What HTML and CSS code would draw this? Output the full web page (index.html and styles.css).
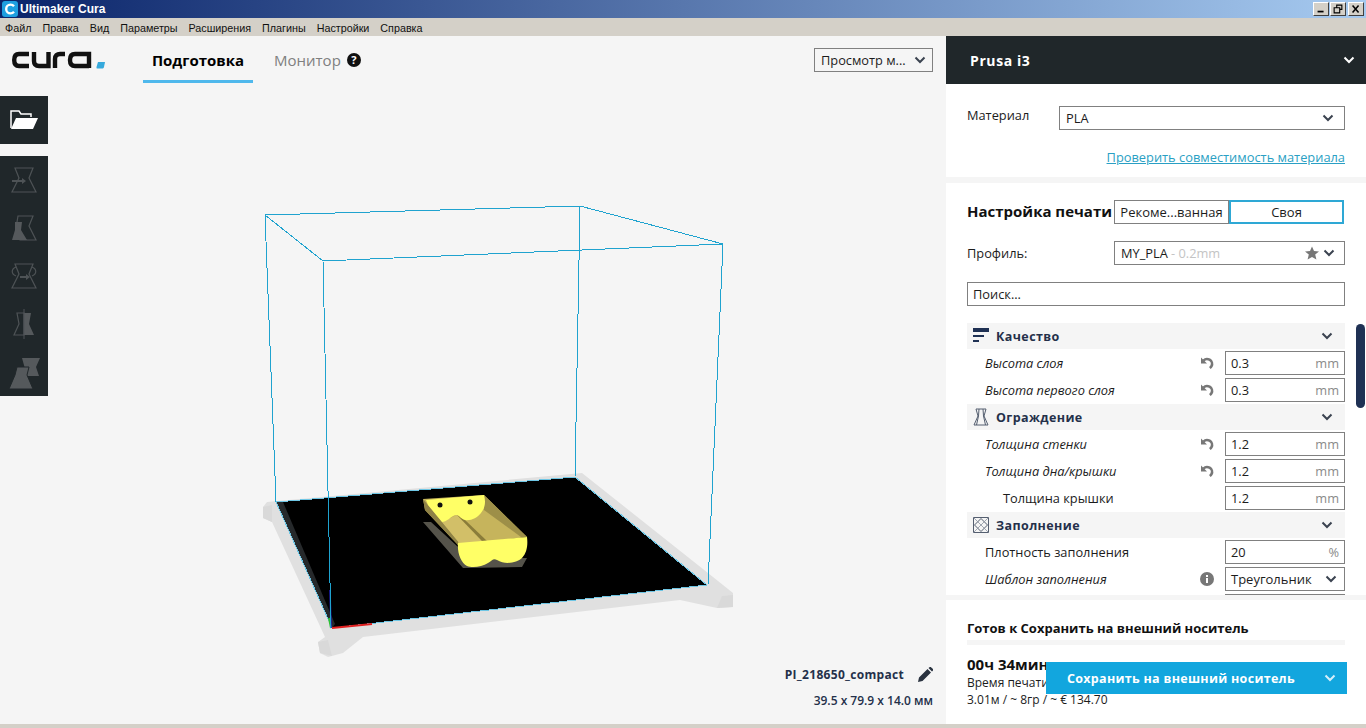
FILE: index.html
```html
<!DOCTYPE html>
<html lang="ru">
<head>
<meta charset="utf-8">
<title>Ultimaker Cura</title>
<link rel="stylesheet" href="styles.css">
</head>
<body>
<svg class="defs" width="0" height="0">
  <symbol id="chev" viewBox="0 0 12 8"><path d="M1.5 1.5 6 6l4.5-4.5" fill="none" stroke="currentColor" stroke-width="2"/></symbol>
  <symbol id="reset" viewBox="0 0 14 14"><path d="M3.5 4.6C5 3 7.5 2.6 9.6 3.7c2.3 1.3 3.1 4.1 1.9 6.4-.4.8-1 1.4-1.7 1.9" fill="none" stroke="#777" stroke-width="2.6"/><path d="M1 1.600v6h6z" fill="#777"/></symbol>
</svg>
<div class="window">
  <div class="titlebar">
    <svg class="appicon" viewBox="0 0 16 16"><rect width="16" height="16" rx="3" fill="#1e9fe0"/><path d="M12 5.2C11 4 9.8 3.6 8.6 3.6 6 3.6 4.2 5.6 4.2 8s1.800 4.400 4.400 4.400c1.200 0 2.400-.4 3.400-1.600" fill="none" stroke="#fff" stroke-width="2.400"/></svg>
    <span class="apptitle">Ultimaker Cura</span>
    <div class="winbtns">
      <span class="winbtn"><svg viewBox="0 0 16 14"><rect x="4" y="9" width="7" height="2" fill="#000"/></svg></span>
      <span class="winbtn"><svg viewBox="0 0 16 14"><path d="M6.500 5V2.500h6v5H10M3.500 5.500h6.500v6H3.500z" fill="none" stroke="#000" stroke-width="1.300"/></svg></span>
      <span class="winbtn winclose"><svg viewBox="0 0 16 14"><path d="m4 3 7 8M11 3l-7 8" stroke="#000" stroke-width="1.800"/></svg></span>
    </div>
  </div>
  <div class="menubar">
    <span>Файл</span><span>Правка</span><span>Вид</span><span>Параметры</span><span>Расширения</span><span>Плагины</span><span>Настройки</span><span>Справка</span>
  </div>
  <div class="main">
    <div class="stage">
      <svg class="scene" viewBox="0 0 946 692" width="946" height="692">
        <g transform="translate(0 -36)">
          <path d="M263 507 267 502 582 473 713 577 733 593 733 607 717 608 680 600 363 637 343 653 328 657 320 653 318 642 325 637 272 522 263 518z" fill="#e0e0e0"/>
          <path d="M263 507 272 505 272 522 263 518zM733 595 722 596 717 608 733 607zM318 642 328 640 332 656 320 653z" fill="#d9d9d9"/>
          <path d="M276 502 575 477 707 585 332 628z" fill="#000"/>
          <path d="M276 502 283 502 335 624 332 628z" fill="#26292b"/>
          <path class="crisp" d="M276 502 575 477 707 585 332 628z" fill="none" stroke="#6fc6e4" stroke-width="1"/>
          <path d="M332 628 372 624" stroke="#e02020" stroke-width="2"/>
          <path d="M331 628 329 618" stroke="#30c030" stroke-width="2"/>
          <path d="M331 628 330 590" stroke="#2020c0" stroke-width="1.500"/>
          <path class="crisp" d="M265 215 580 206 723 244 323 261z M265 215 276 502 M580 206 575 477 M723 244 708 585 M323 261 331 628" fill="none" stroke="#1fa3cf" stroke-width="1"/>
          <path d="M423 522 431 522 470 558 527 558 522 567 463 568z" fill="#55534a"/>
          <path d="M423 499 484 495 527 537 458 545 425 510z" fill="#c4b25a"/>
          <path d="M423 499 425 510 458 545 458 541 428 505z" fill="#8f8246"/>
          <path d="M442 522 457 515 482 541 460 544z" fill="#d2bf68"/>
          <path d="M465 520 484 510 523 537 487 541z" fill="#c6b45c"/>
          <path d="M457 515 465 520 487 541 482 541z" fill="#8a7c3a"/>
          <path d="M484 495 527 537 521 537 484 510z" fill="#9d8f48"/>
          <path d="M426 500 484 495C486 502 485 508 481 513 477 518 471 521 465 520 461 519 459 515 457 515 454 515 451 517 449 519 446 521 444 522 442 522L428 505z" fill="#ffff66"/>
          <path d="M458 543 527 537C528 545 527 553 522 558 517 563 505 565 497 560 493 558 492 561 488 563 482 567 472 568 467 566 461 563 457 553 458 543z" fill="#ffff66"/>
          <circle cx="440" cy="505" r="2.500" fill="#111"/><circle cx="470" cy="502" r="2.500" fill="#111"/>
        </g>
      </svg>
      <div class="stagebar">
        <svg class="logo" viewBox="0 0 94 20">
          <g fill="none" stroke="#111" stroke-width="4.400">
            <path d="M17 4H7C3.500 4 2.200 6 2.200 10s1.300 6 4.800 6h10"/>
            <path d="M22 2v9c0 3.500 2 5 5 5h9.500V2"/>
            <path d="M43 18V9c0-3.500 2-5 5-5h5"/>
            <path d="M77 18V4H63c-3.500 0-5 2-5 6s1.500 6 5 6h14"/>
          </g>
          <path d="M86 12h7l-1 5c-.3 1-1 1.500-2 1.500h-4.500c-1 0-1-.5-1-1.500z" fill="#36a9dc"/>
        </svg>
        <div class="tab tab-active">Подготовка</div>
        <div class="tab tab-idle">Монитор</div>
        <span class="helpicon">?</span>
        <div class="viewselect"><span>Просмотр м...</span><svg class="chev"><use href="#chev"/></svg></div>
      </div>
      <div class="tool tool-open">
        <svg viewBox="0 0 48 48" width="48" height="48"><path d="M11 32V15h8l2 3h10v3" fill="none" stroke="#fff" stroke-width="1.500"/><path d="M16 22h22l-5 11H11z" fill="#fff"/></svg>
      </div>
      <div class="toolset">
        <div class="tool"><svg viewBox="0 0 48 48" width="48" height="48"><g fill="none" stroke="#4e5356" stroke-width="1.200"><path d="M15 12h18l-4 10 7 14H12l7-14z"/></g><path d="M12 24h10v-2l4 3-4 3v-2H12z" fill="#4e5356"/></svg></div>
        <div class="tool"><svg viewBox="0 0 48 48" width="48" height="48"><path d="M18 12h15l-4 10 7 14H20l-2-8-1-10z" fill="none" stroke="#4e5356" stroke-width="1.200"/><path d="M15 18h7l-1 8 6 10H12l3-10z" fill="#55595c"/></svg></div>
        <div class="tool"><svg viewBox="0 0 48 48" width="48" height="48"><path d="M15 12h18l-4 10 7 14H12l7-14z" fill="none" stroke="#4e5356" stroke-width="1.200"/><path d="M16 15c-5 2-5 7 0 9M32 15c5 2 5 7 0 9" fill="none" stroke="#4e5356" stroke-width="1.200"/><path d="M20 24h6v-2l4 3-4 3v-2h-6z" fill="#4e5356"/></svg></div>
        <div class="tool"><svg viewBox="0 0 48 48" width="48" height="48"><path d="M17 13h7v22H14l5-11z" fill="none" stroke="#4e5356" stroke-width="1.200"/><path d="M24 13h7l-2 11 5 11H24z" fill="#55595c"/><path d="M24 9v30" stroke="#4e5356" stroke-width="1"/></svg></div>
        <div class="tool"><svg viewBox="0 0 48 48" width="48" height="48"><path d="M22 10h18l-4 9 3 9H27z" fill="#55595c"/><path d="M17 19h12l-2 8 6 14H9l6-14z" fill="#55595c" stroke="#20272a"/></svg></div>
      </div>
      <div class="objinfo">
        <div class="objname"><span>PI_218650_compact</span>
          <svg viewBox="0 0 16 16" width="16" height="16"><path d="M1 15l1-4.500 8.500-8.500 3.500 3.500L5.500 14zM11.500 1l3.500 3.500 1-1c.4-.5.4-1 0-1.500L14 .2c-.5-.4-1-.4-1.500 0z" fill="#2a3340"/></svg>
        </div>
        <div class="objsize">39.5 x 79.9 x 14.0 мм</div>
      </div>
    </div>
    <div class="sidebar">
      <div class="machine"><span>Prusa i3</span><svg class="chev chev-light"><use href="#chev"/></svg></div>
      <div class="matpanel">
        <div class="matrow">
          <span class="matlabel">Материал</span>
          <div class="field matfield"><span>PLA</span><svg class="chev"><use href="#chev"/></svg></div>
        </div>
        <a class="matlink">Проверить совместимость материала</a>
      </div>
      <div class="setup">
        <div class="setuphead">
          <span class="setuptitle">Настройка печати</span>
          <div class="modes"><span class="mode">Рекоме...ванная</span><span class="mode mode-on">Своя</span></div>
        </div>
        <div class="profilerow">
          <span>Профиль:</span>
          <div class="field profilefield"><span class="pname">MY_PLA</span><span class="pdim">&nbsp;- 0.2mm</span>
            <svg class="star" viewBox="0 0 14 14" width="14" height="14"><path d="M7 .5 9 5l5 .4-3.800 3.200L11.400 13.500 7 11l-4.400 2.500 1.200-4.900L0 5.400 5 5z" fill="#777"/></svg>
            <svg class="chev"><use href="#chev"/></svg>
          </div>
        </div>
        <div class="field searchfield">Поиск...</div>

        <div class="cat cat-first">
          <svg viewBox="0 0 16 18" width="16" height="18"><path d="M0 1h16v4H0z" fill="#1f3154"/><path d="M0 8h11v2H0zM0 13h6v2H0z" fill="#1f3154"/></svg>
          <span>Качество</span><svg class="chev"><use href="#chev"/></svg>
        </div>
        <div class="rows">
          <div class="row"><span class="lbl it">Высота слоя</span><svg class="rowicon"><use href="#reset"/></svg><div class="field val">0.3<em>mm</em></div></div>
          <div class="row"><span class="lbl it">Высота первого слоя</span><svg class="rowicon"><use href="#reset"/></svg><div class="field val">0.3<em>mm</em></div></div>
        </div>
        <div class="cat">
          <svg viewBox="0 0 16 18" width="16" height="18"><path d="M3 1h10l-2 7 4 9H1l4-9zM6 1 5.500 8 3.500 17M10 1l.5 7 2 9" fill="none" stroke="#555f70" stroke-width="1"/></svg>
          <span>Ограждение</span><svg class="chev"><use href="#chev"/></svg>
        </div>
        <div class="rows">
          <div class="row"><span class="lbl it">Толщина стенки</span><svg class="rowicon"><use href="#reset"/></svg><div class="field val">1.2<em>mm</em></div></div>
          <div class="row"><span class="lbl it">Толщина дна/крышки</span><svg class="rowicon"><use href="#reset"/></svg><div class="field val">1.2<em>mm</em></div></div>
          <div class="row"><span class="lbl sub">Толщина крышки</span><div class="field val">1.2<em>mm</em></div></div>
        </div>
        <div class="cat">
          <svg viewBox="0 0 16 16" width="16" height="16"><path d="M.5.5h15v15H.5z" fill="none" stroke="#555f70"/><path d="M8 1.500 14.500 8 8 14.500 1.500 8z" fill="none" stroke="#555f70"/><path d="M1 1l3.500 3.500M15 1l-3.500 3.500M1 15l3.500-3.500M15 15l-3.500-3.500M4.500 4.500l7 7M11.500 4.500l-7 7" stroke="#8a92a0" stroke-width=".8"/></svg>
          <span>Заполнение</span><svg class="chev"><use href="#chev"/></svg>
        </div>
        <div class="rows">
          <div class="row"><span class="lbl">Плотность заполнения</span><div class="field val">20<em>%</em></div></div>
          <div class="row"><span class="lbl it">Шаблон заполнения</span>
            <svg class="rowicon" viewBox="0 0 14 14"><circle cx="7" cy="7" r="7" fill="#777"/><path d="M6 3h2v2H6zM6 6h2v5H6z" fill="#fff"/></svg>
            <div class="field val valselect">Треугольник<svg class="chev"><use href="#chev"/></svg></div></div>
          <div class="row"><span class="lbl"></span><div class="field val"></div></div>
        </div>
      </div>
      <div class="output">
        <div class="outtitle">Готов к Сохранить на внешний носитель</div>
        <div class="outrule"></div>
        <div class="outtime">00ч 34мин</div>
        <div class="outline">Время печати</div>
        <div class="outline">3.01м / ~ 8гр / ~ € 134.70</div>
        <div class="savebtn"><span>Сохранить на внешний носитель</span><svg class="chev"><use href="#chev"/></svg></div>
      </div>
      <div class="scrollthumb"></div>
    </div>
  </div>
  <div class="bottomedge"></div>
</div>
</body>
</html>
```
FILE: styles.css
```css
* { box-sizing: border-box; }
html, body { margin: 0; padding: 0; }
body { width: 1366px; height: 728px; overflow: hidden; background: #f5f5f5; font-family: "Open Sans", "Noto Sans", sans-serif; color: #1c1c1c; font-size: 12.800px; }
.defs { position: absolute; }
.window { display: flex; flex-direction: column; height: 728px; }

.titlebar { height: 18px; display: flex; align-items: center; padding-left: 2px; background: linear-gradient(90deg, #0a246a 0%, #a6caf0 100%); flex: none; }
.appicon { width: 16px; height: 16px; flex: none; }
.apptitle { margin-left: 2px; color: #fff; font: bold 12px "Liberation Sans", sans-serif; }
.winbtns { margin-left: auto; display: flex; gap: 0; padding-right: 2px; }
.winbtn { width: 16px; height: 14px; margin-left: 1px; background: #d4d0c8; border: 1px solid; border-color: #fff #404040 #404040 #fff; display: flex; overflow: hidden; }
.winbtn svg { width: 14px; height: 12px; }
.winclose { margin-left: 2px; }

.menubar { height: 18px; flex: none; background: #d4d0c8; display: flex; align-items: center; gap: 11px; padding: 1px 0 0 5px; font: 10.750px "Liberation Sans", sans-serif; color: #111; }

.main { flex: 1; display: flex; min-height: 0; }
.stage { width: 946px; position: relative; display: flex; flex-direction: column; align-items: flex-start; background: #f5f5f5; }
.scene { position: absolute; left: 0; top: 0; }
.crisp { shape-rendering: crispEdges; }

.stagebar { position: relative; width: 100%; height: 48px; display: flex; align-items: flex-start; flex: none; }
.logo { width: 94px; height: 20px; margin: 14px 0 0 12px; flex: none; }
.tab { height: 47px; padding-top: 13px; font-size: 15px; line-height: 22px; }
.tab-active { margin-left: 37px; width: 110px; text-align: center; font-weight: 700; color: #000; border-bottom: 3px solid #4fb8ec; }
.tab-idle { margin-left: 21px; color: #7f7f7f; }
.helpicon { width: 14px; height: 14px; margin: 17px 0 0 6px; border-radius: 50%; background: #111; color: #fff; font-size: 11px; font-weight: 700; line-height: 14px; text-align: center; flex: none; }
.viewselect { margin: 12px 13px 0 auto; width: 119px; height: 24px; border: 1px solid #808080; background: #fff0; display: flex; align-items: center; justify-content: space-between; padding: 0 6px; font-size: 12.800px; white-space: nowrap; }

.chev { width: 12px; height: 8px; color: #3b4350; flex: none; }
.chev-light { color: #fff; }

.tool { position: relative; width: 48px; height: 48px; background: #20272a; display: block; }
.tool svg { display: block; }
.tool-open { margin-top: 12px; flex: none; }
.toolset { position: relative; margin-top: 12px; flex: none; }

.objinfo { position: relative; margin-top: auto; align-self: flex-end; padding: 0 13px 15px 0; text-align: right; }
.objname { display: flex; align-items: center; gap: 13px; justify-content: flex-end; font-size: 12px; font-weight: 700; color: #24304a; letter-spacing: .3px; }
.objsize { margin-top: 9px; font-size: 12px; font-weight: 600; color: #24304a; }

.sidebar { width: 420px; position: relative; display: flex; flex-direction: column; background: #f5f5f5; }
.machine { height: 48px; flex: none; background: #20272a; color: #fff; display: flex; align-items: center; justify-content: space-between; padding: 0 11px 0 24px; font-size: 14px; font-weight: 700; letter-spacing: .6px; }
.matpanel { height: 93px; flex: none; background: #fff; padding: 22px 21px 0; display: flex; flex-direction: column; }
.matrow { display: flex; align-items: center; }
.matlabel { width: 92px; margin-top: -6px; }
.field { border: 1px solid #808080; background: #fff; height: 24px; display: flex; align-items: center; padding: 0 6px; }
.matfield { flex: 1; justify-content: space-between; padding-right: 10px; }
.matlink { align-self: flex-end; margin-top: 18px; color: #2a9fc4; text-decoration: underline; font-size: 12.850px; line-height: 18px; }

.setup { height: 412px; flex: none; margin-top: 6px; background: #fff; padding: 17px 21px 0; overflow: hidden; }
.setuphead { display: flex; align-items: center; justify-content: space-between; height: 24px; }
.setuptitle { font-size: 15px; font-weight: 700; color: #111; white-space: nowrap; margin-top: -2px; }
.modes { display: flex; width: 230px; flex: none; margin-right: 1px; font-size: 13px; }
.mode { width: 115px; height: 24px; border: 1px solid #808080; display: flex; align-items: center; justify-content: center; }
.mode-on { border: 2px solid #2ea8d5; }
.profilerow { display: flex; align-items: center; justify-content: space-between; margin-top: 17px; }
.profilefield { width: 231px; }
.pdim { color: #c4c4c4; }
.star { margin-left: auto; }
.profilefield .chev { margin-left: 4px; margin-right: 3px; }
.searchfield { margin-top: 17px; padding-left: 5px; }

.cat { height: 26px; margin-top: 2px; background: #f5f5f5; display: flex; align-items: center; padding: 0 12px 0 6px; font-size: 12.500px; font-weight: 700; color: #24304a; letter-spacing: .4px; }
.cat-first { margin-top: 17px; }
.cat > svg:first-child { width: 16px; flex: none; }
.cat span { flex: 1; margin-left: 7px; }
.rows { display: flex; flex-direction: column; gap: 3px; margin-top: 2px; }
.row { display: flex; align-items: center; height: 24px; padding-left: 18px; }
.lbl { flex: 1; }
.it { font-style: italic; }
.sub { padding-left: 18px; }
.rowicon { width: 14px; height: 14px; margin-right: 11px; flex: none; }
.val { width: 120px; flex: none; justify-content: space-between; padding: 0 5px; }
.val em { font-style: normal; color: #8a8a8a; }
.valselect { font-size: 13px; }
.valselect .chev { margin-right: 2px; }

.output { position: relative; flex: 1; margin-top: 5px; background: #fff; padding: 19px 21px 0; }
.outtitle { font-size: 13px; font-weight: 700; color: #111; line-height: 18px; }
.outrule { height: 5px; margin-top: 3px; background: #f5f5f5; }
.outtime { margin-top: 9px; font-size: 15px; font-weight: 700; color: #111; line-height: 20px; }
.outline { font-size: 12px; line-height: 17px; }
.savebtn { position: absolute; left: 100px; top: 62px; width: 301px; height: 32px; background: #12a6de; color: #fff; display: flex; align-items: center; justify-content: space-between; padding: 0 11px 0 21px; font-size: 12.500px; font-weight: 700; letter-spacing: .3px; }
.savebtn .chev { color: #d5eefa; }

.scrollthumb { position: absolute; right: 1px; top: 288px; width: 9px; height: 84px; border-radius: 5px; background: #1f3154; }
.bottomedge { height: 4px; flex: none; background: #d4d0c8; }
```
